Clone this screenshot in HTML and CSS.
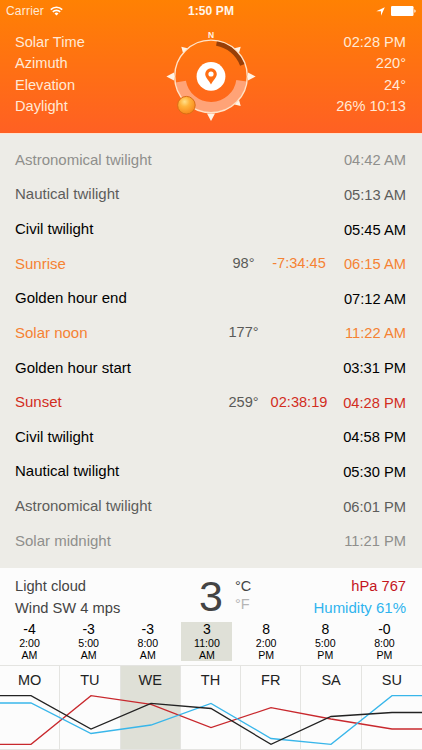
FILE: index.html
```html
<!DOCTYPE html>
<html lang="en">
<head>
  <meta charset="UTF-8" />
  <meta name="viewport" content="width=device-width, initial-scale=1.0"/>
  <title>Solar Time</title>
  <link rel="stylesheet" href="styles.css">
</head>
<body>
  <header class="header">
    <div class="status-bar">
      <div class="carrier">
        <span>Carrier</span>
        <svg class="wifi" width="13" height="10" viewBox="0 0 13 10">
          <path d="M.8 3.6a8 8 0 0 1 11.4 0M2.8 5.9a5.2 5.2 0 0 1 7.4 0" fill="none" stroke="#fff" stroke-width="1.6"/>
          <path d="M6.5 9.6L4.5 7.6a2.8 2.8 0 0 1 4 0z" fill="#fff"/>
        </svg>
      </div>
      <div class="clock">1:50 PM</div>
      <div class="indicators">
        <svg width="9" height="9" viewBox="0 0 9 9"><path d="M8.8 .2L5 8.8V4.3H.3z" fill="#fff"/></svg>
        <svg width="25" height="10" viewBox="0 0 25 10">
          <rect width="22.5" height="10" rx="1.2" fill="#fff"/>
          <path d="M23.4 3.2q1.2.4 1.2 1.8t-1.2 1.8z" fill="#fff"/>
        </svg>
      </div>
    </div>

    <div class="solar-info">
      <div class="info-col">
        <div>Solar Time</div>
        <div>Azimuth</div>
        <div>Elevation</div>
        <div>Daylight</div>
      </div>

      <svg class="compass" width="100" height="100" viewBox="-50 -50.4 100 100">
        <defs>
          <radialGradient id="sun" cx="0.4" cy="0.3" r="0.7">
            <stop offset="0" stop-color="#ffe08a"/>
            <stop offset="0.4" stop-color="#ffb43c"/>
            <stop offset="1" stop-color="#f8891c"/>
          </radialGradient>
        </defs>
        <!-- daylight and moon arcs -->
        <path d="M35.6 5A36 36 0 0 1 -35.5 6.2L-25.1 4.4A25.5 25.5 0 0 0 25.3 3.5z" fill="#ffa377"/>
        <path d="M5.9 -35.5A36 36 0 0 1 33.8 -12.3L29.1 -10.6A31 31 0 0 0 5.1 -30.6z" fill="#983f08"/>
        <circle r="36.3" fill="none" stroke="#ffe3c8" stroke-width="1.4"/>
        <g fill="#fff3e6">
          <path d="M37 -4L44.6 0L37 4z"/>
          <path d="M-37 -4L-44.6 0L-37 4z"/>
          <path d="M-4 37L0 44.6L4 37z"/>
          <path d="M36.5 -3.2L42 0L36.5 3.2z" transform="rotate(45)"/>
          <path d="M36.5 -3.2L42 0L36.5 3.2z" transform="rotate(-45)"/>
          <path d="M36.5 -3.2L42 0L36.5 3.2z" transform="rotate(-135)"/>
        </g>
        <text x="0" y="-38.2" text-anchor="middle" class="north">N</text>
        <circle r="14.4" fill="#fff"/>
        <path d="M0 8.2C-2.2 3.8-5.8 1.2-5.8-2.4a5.8 5.8 0 0 1 11.6 0C5.8 1.2 2.2 3.8 0 8.2z" fill="#ff6e13"/>
        <circle cy="-2.4" r="2.6" fill="#fff"/>
        <circle cx="-24.6" cy="28.8" r="8.8" fill="url(#sun)" stroke="#d96d14" stroke-width="1"/>
      </svg>

      <div class="info-col right">
        <div>02:28 PM</div>
        <div>220°</div>
        <div>24°</div>
        <div>26% 10:13</div>
      </div>
    </div>
  </header>

  <main class="events">
    <div class="event faint"><span class="name">Astronomical twilight</span><span class="time">04:42 AM</span></div>
    <div class="event dim"><span class="name">Nautical twilight</span><span class="time">05:13 AM</span></div>
    <div class="event"><span class="name">Civil twilight</span><span class="time">05:45 AM</span></div>
    <div class="event orange"><span class="name">Sunrise</span><span class="angle">98°</span><span class="countdown">-7:34:45</span><span class="time">06:15 AM</span></div>
    <div class="event"><span class="name">Golden hour end</span><span class="time">07:12 AM</span></div>
    <div class="event orange"><span class="name">Solar noon</span><span class="angle">177°</span><span class="countdown"></span><span class="time">11:22 AM</span></div>
    <div class="event"><span class="name">Golden hour start</span><span class="time">03:31 PM</span></div>
    <div class="event red"><span class="name">Sunset</span><span class="angle">259°</span><span class="countdown">02:38:19</span><span class="time">04:28 PM</span></div>
    <div class="event"><span class="name">Civil twilight</span><span class="time">04:58 PM</span></div>
    <div class="event"><span class="name">Nautical twilight</span><span class="time">05:30 PM</span></div>
    <div class="event dim"><span class="name">Astronomical twilight</span><span class="time">06:01 PM</span></div>
    <div class="event faint"><span class="name">Solar midnight</span><span class="time">11:21 PM</span></div>
  </main>

  <section class="weather">
    <div class="current">
      <div class="conditions">
        <div>Light cloud</div>
        <div>Wind SW 4 mps</div>
      </div>
      <div class="temp">3</div>
      <div class="units">
        <div>°C</div>
        <div class="inactive">°F</div>
      </div>
      <div class="readings">
        <div class="pressure">hPa 767</div>
        <div class="humidity">Humidity 61%</div>
      </div>
    </div>

    <div class="hours">
      <div class="hour"><b>-4</b>2:00<br>AM</div>
      <div class="hour"><b>-3</b>5:00<br>AM</div>
      <div class="hour"><b>-3</b>8:00<br>AM</div>
      <div class="hour selected"><b>3</b>11:00<br>AM</div>
      <div class="hour"><b>8</b>2:00<br>PM</div>
      <div class="hour"><b>8</b>5:00<br>PM</div>
      <div class="hour"><b>-0</b>8:00<br>PM</div>
    </div>

    <div class="week">
      <div class="day">MO</div>
      <div class="day">TU</div>
      <div class="day selected">WE</div>
      <div class="day">TH</div>
      <div class="day">FR</div>
      <div class="day">SA</div>
      <div class="day">SU</div>
      <svg class="chart" width="422" height="85" viewBox="0 0 422 85">
        <polyline class="line-red" points="0,79.3 31,79.3 91,30.7 151,39.3 211,62.5 271,42.7 331,54 392,64 422,64"/>
        <polyline class="line-blue" points="0,38 31,38 91,68.5 151,60 211,38.5 271,73.5 331,79.3 392,30.7 422,30.7"/>
        <polyline class="line-black" points="0,30.7 31,30.7 91,64 151,38.3 211,43.5 271,79.3 331,51.5 392,47.5 422,47.5"/>
      </svg>
    </div>
  </section>
</body>
</html>
```

FILE: styles.css
```css
:root {
  --orange: #f58233;
  --red: #d22d1e;
  --blue: #2fb4ee;
  --selected: #dfe0d7;
  --line: #e4e4e1;
}

* {
  box-sizing: border-box;
}

body {
  margin: 0;
  width: 422px;
  height: 750px;
  overflow: hidden;
  display: flex;
  flex-direction: column;
  font-family: "Liberation Sans", Arial, sans-serif;
  font-size: 15px;
  background: #fcfcfc;
  color: #000;
}

.header {
  height: 134px;
  background: linear-gradient(#ff8103, #ff6023);
  border-bottom: 1px solid #ffe3d0;
  color: #ffe9d6;
}

.status-bar {
  height: 22px;
  display: grid;
  grid-template-columns: 1fr auto 1fr;
  align-items: center;
  padding: 0 6px;
}

.carrier {
  display: flex;
  align-items: center;
  gap: 6px;
  font-size: 12px;
  letter-spacing: 0.2px;
}

.clock {
  font-weight: bold;
  font-size: 12px;
  letter-spacing: 0.1px;
  color: #fff5ea;
}

.indicators {
  display: flex;
  align-items: center;
  justify-content: flex-end;
  gap: 6px;
}

.solar-info {
  display: grid;
  grid-template-columns: 1fr 100px 1fr;
  padding: 4px 16px 0 15px;
}

.info-col {
  padding-top: 6px;
  font-size: 14.6px;
  line-height: 21.4px;
}

.right {
  text-align: right;
}

.compass {
  display: block;
}

.north {
  font-size: 8.5px;
  font-weight: bold;
  fill: #fff3e6;
}

.events {
  height: 434px;
  padding: 8px 16px 0 15px;
  background: #edece7;
}

.event {
  height: 34.64px;
  display: grid;
  grid-template-columns: 1fr 31px 80px 67px;
  align-items: center;
}

.name {
  grid-column: 1;
}

.angle {
  grid-column: 2;
  text-align: center;
  font-size: 14.6px;
  color: #5a5a58;
}

.countdown {
  grid-column: 3;
  text-align: center;
  font-size: 14.6px;
}

.time {
  grid-column: 4;
  padding-top: 2px;
  text-align: right;
  font-size: 14.7px;
}

.faint {
  color: #8f8f8c;
}

.dim {
  color: #5d5d5b;
}

.orange {
  color: var(--orange);
}

.red {
  color: var(--red);
}

.weather {
  flex: 1;
}

.current {
  height: 54px;
  display: grid;
  grid-template-columns: 184px 36px 40px 1fr;
  padding: 0 16px 0 15px;
  color: #444;
}

.conditions,
.readings {
  padding-top: 7px;
  font-size: 14.7px;
  line-height: 22px;
}

.readings {
  text-align: right;
}

.pressure {
  color: #c4161c;
}

.humidity {
  font-size: 15px;
  color: var(--blue);
}

.temp {
  font-size: 43px;
  line-height: 56px;
}

.units {
  padding-top: 10px;
  font-size: 14.5px;
  line-height: 17.5px;
}

.inactive {
  color: #b5b5b5;
}

.hours {
  display: flex;
  justify-content: space-between;
  padding: 0 12px 0 4px;
}

.hour {
  width: 51px;
  height: 39px;
  text-align: center;
  font-size: 10.6px;
  line-height: 12px;
}

.hour b {
  display: block;
  font-size: 14px;
  font-weight: normal;
  line-height: 15px;
}

.selected {
  background: var(--selected);
}

.week {
  position: relative;
  height: 85px;
  margin-top: 4px;
  display: grid;
  grid-template-columns: repeat(7, 1fr);
  border-top: 1px solid var(--line);
  border-bottom: 1px solid var(--line);
}

.day {
  padding-top: 6px;
  text-align: center;
  font-size: 14.5px;
  line-height: 17px;
  color: #222;
  border-right: 1px solid var(--line);
}

.day:nth-child(7) {
  border-right: none;
}

/* forecast lines run over all seven days */
.chart {
  position: absolute;
  top: -1px;
  left: 0;
  fill: none;
  stroke-width: 1.3;
}

.line-red {
  stroke: #c8282d;
}

.line-blue {
  stroke: #38b6ea;
}

.line-black {
  stroke: #222;
}
```
